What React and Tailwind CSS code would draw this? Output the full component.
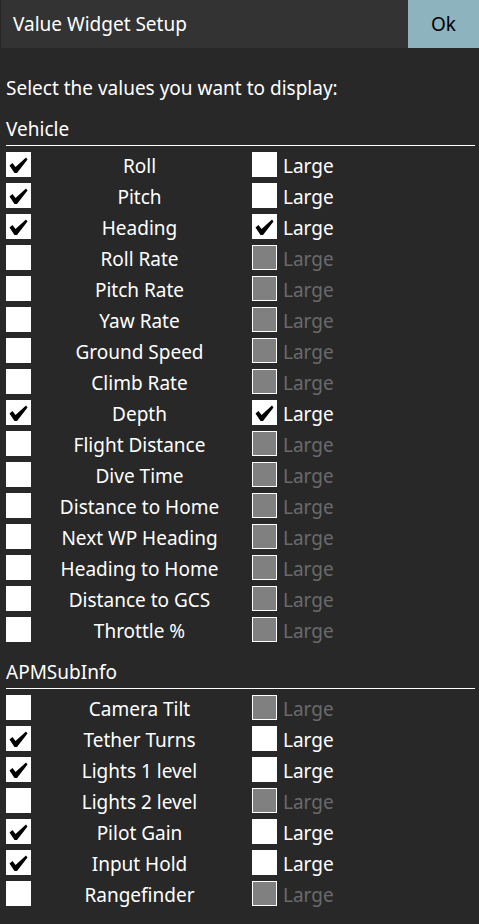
import React from "react";

const vehicle = [
  ["Roll", true, "on", false],
  ["Pitch", true, "on", false],
  ["Heading", true, "on", true],
  ["Roll Rate", false, "off"],
  ["Pitch Rate", false, "off"],
  ["Yaw Rate", false, "off"],
  ["Ground Speed", false, "off"],
  ["Climb Rate", false, "off"],
  ["Depth", true, "on", true],
  ["Flight Distance", false, "off"],
  ["Dive Time", false, "off"],
  ["Distance to Home", false, "off"],
  ["Next WP Heading", false, "off"],
  ["Heading to Home", false, "off"],
  ["Distance to GCS", false, "off"],
  ["Throttle %", false, "off"],
];

const sub = [
  ["Camera Tilt", false, "off"],
  ["Tether Turns", true, "on", false],
  ["Lights 1 level", true, "on", false],
  ["Lights 2 level", false, "off"],
  ["Pilot Gain", true, "on", false],
  ["Input Hold", true, "on", false],
  ["Rangefinder", false, "off"],
];

function Check() {
  return (
    <svg width="25" height="25" viewBox="0 0 25 25" className="block">
      <path d="M3.5 13.5 L6.5 11 L9.5 15 L20 5.5 L21.5 7.5 L11 21 L8.5 21 Z" fill="#000" />
    </svg>
  );
}

function Box({ checked, disabled }) {
  if (disabled) {
    return <div className="w-[25px] h-[25px] shrink-0 bg-[#808080] border border-white" />;
  }
  return (
    <div className="w-[25px] h-[25px] shrink-0 bg-white">{checked ? <Check /> : null}</div>
  );
}

function Row({ item }) {
  const [label, checked, state, large] = item;
  const disabled = state === "off";
  return (
    <div className="flex h-[25px]">
      <Box checked={checked} />
      <div className="w-[217px] text-center text-white pt-[3px] leading-[22px] whitespace-nowrap">{label}</div>
      <div className="ml-[4px]">
        <Box checked={large} disabled={disabled} />
      </div>
      <div className={"ml-[6px] pt-[3px] leading-[22px] " + (disabled ? "text-[#6a6a6a]" : "text-white")}>Large</div>
    </div>
  );
}

export default function App() {
  return (
    <div
      className="w-[479px] h-[924px] bg-[#282828] text-[19px] overflow-hidden"
      style={{ fontFamily: '"Noto Sans", "Open Sans", sans-serif' }}
    >
      <div className="flex h-[48px] bg-[#333333] border-l border-[#262626]">
        <div className="flex-1 flex items-center pl-[12px] pt-[1px] text-white">Value Widget Setup</div>
        <div className="w-[71px] flex items-center justify-center pt-[1px] bg-[#8cb3be] text-black">Ok</div>
      </div>
      <div className="px-[6px]">
        <div className="mt-[28px] h-[24px] leading-[24px] text-white whitespace-nowrap">Select the values you want to display:</div>
        <div className="mt-[17px] h-[24px] leading-[24px] text-white">Vehicle</div>
        <div className="mt-[4px] mr-[-2px] h-px bg-white" />
        <div className="mt-[6px] flex flex-col gap-[6px]">
          {vehicle.map((v) => (
            <Row key={v[0]} item={v} />
          ))}
        </div>
        <div className="mt-[18px] h-[24px] leading-[24px] text-white">APMSubInfo</div>
        <div className="mt-[4px] mr-[-2px] h-px bg-white" />
        <div className="mt-[6px] flex flex-col gap-[6px]">
          {sub.map((v) => (
            <Row key={v[0]} item={v} />
          ))}
        </div>
      </div>
    </div>
  );
}
